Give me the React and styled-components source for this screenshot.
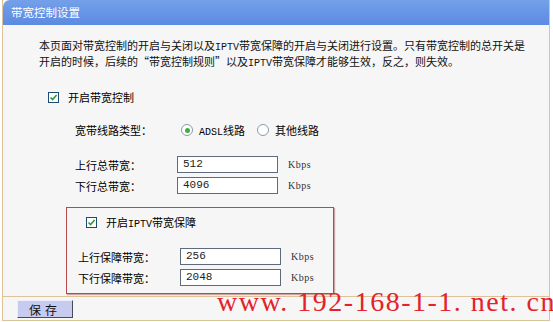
import React from 'react';
import styled, { createGlobalStyle } from 'styled-components';

const GlobalStyle = createGlobalStyle`
  html, body {
    margin: 0;
    padding: 0;
    background: #ffffff;
  }
  body {
    font-family: "SimSun", "Noto Sans CJK SC", sans-serif;
    font-size: 11px;
    color: #000;
  }
`;

const Panel = styled.div`
  margin-left: 2px;
  width: 546px;
  background-color: #f6f6f6;
  border-left: 1px solid #dcc39a;
  border-right: 1px solid #dcc39a;
  border-bottom: 1px solid #dcc39a;
  display: flex;
  flex-direction: column;
`;

const Header = styled.div`
  height: 25px;
  line-height: 25px;
  padding-left: 8px;
  color: #fff;
  font-size: 11.5px;
  background: linear-gradient(#74a0ea, #5b8ae2);
  border-top-left-radius: 7px;
`;

const Body = styled.div`
  padding: 12px 0 0 0;
`;

const Intro = styled.p`
  margin: 0 0 0 36px;
  width: 490px;
  height: 32px;
  line-height: 16px;
  font-size: 11px;
  color: #111;
  overflow: hidden;
`;

const Latin = styled.span`
  font-family: "Liberation Mono", monospace;
  font-size: 10px;
  line-height: 1;
`;

const CheckRow = styled.label`
  display: flex;
  align-items: center;
  height: 16px;
  margin: ${p => p.$top}px 0 0 ${p => p.$left}px;
  gap: 9px;
  font-size: 11px;
  line-height: 16px;
`;

const Check = styled.span`
  box-sizing: border-box;
  width: 11px;
  height: 11px;
  border: 1px solid #1c4a70;
  background: #fff;
  display: flex;
  align-items: center;
  justify-content: center;
`;

const Row = styled.div`
  display: flex;
  align-items: center;
  height: ${p => p.$h || 17}px;
  line-height: 16px;
  margin: ${p => p.$top}px 0 0 ${p => p.$left}px;
`;

const Label = styled.span`
  width: ${p => p.$w}px;
  flex: none;
`;

const Radios = styled.div`
  display: flex;
  align-items: center;
  gap: 6px;
`;

const Radio = styled.span`
  box-sizing: border-box;
  width: 12px;
  height: 12px;
  border-radius: 50%;
  border: 1px solid #8a9aa8;
  background: #fff;
  display: flex;
  align-items: center;
  justify-content: center;
  margin-left: ${p => p.$gap || 0}px;

  &::after {
    content: '';
    width: 5px;
    height: 5px;
    border-radius: 50%;
    background: ${p => (p.$on ? '#3fae3f' : 'transparent')};
  }
`;

const Input = styled.div`
  box-sizing: border-box;
  width: 101px;
  height: 17px;
  border: 1px solid #5d6b7c;
  background: #fff;
  padding-left: 5px;
  font-family: "Liberation Mono", monospace;
  font-size: 11px;
  line-height: 15px;
  color: #222;
`;

const Unit = styled.span`
  margin-left: 10px;
  font-family: "Liberation Serif", serif;
  font-size: 10px;
  color: #333;
  letter-spacing: 0.5px;
`;

const IptvBox = styled.div`
  box-sizing: border-box;
  margin: 13px 0 0 63px;
  width: 268px;
  height: 87px;
  border: 1px solid #b84a4a;
  box-shadow: 1px 1px 1px rgba(160, 80, 80, 0.5);
  padding-top: 6px;
`;

const Footer = styled.div`
  position: relative;
  height: 23px;
  border-top: 1px solid #dcc39a;
  margin-top: 2px;
  display: flex;
  align-items: center;
  padding-left: 14px;
`;

const SaveButton = styled.button`
  width: 56px;
  height: 18px;
  padding: 0;
  background: #c6cbef;
  border: 1px solid;
  border-color: #eef #4a4a5a #4a4a5a #eef;
  font-family: "SimSun", "Noto Sans CJK SC", sans-serif;
  font-size: 12px;
  letter-spacing: 4px;
  color: #111;
`;

const Watermark = styled.div`
  position: absolute;
  left: 214px;
  top: -11px;
  line-height: 32px;
  font-family: "Liberation Serif", serif;
  font-size: 28px;
  letter-spacing: 1.5px;
  color: #e3222c;
  white-space: nowrap;
`;

const CheckMark = () => (
  <svg width="9" height="9" viewBox="0 0 9 9">
    <path d="M1.5 4.5 L3.6 6.6 L7.6 2" stroke="#2e9a3a" strokeWidth="1.6" fill="none" />
  </svg>
);

const fields = [
  { label: '上行总带宽：', value: '512', top: 18 },
  { label: '下行总带宽：', value: '4096', top: 4 },
];

const iptvFields = [
  { label: '上行保障带宽：', value: '256', top: 18 },
  { label: '下行保障带宽：', value: '2048', top: 4 },
];

export default function App() {
  return (
    <>
      <GlobalStyle />
      <Panel>
        <Header>带宽控制设置</Header>
        <Body>
          <Intro>
            本页面对带宽控制的开启与关闭以及<Latin>IPTV</Latin>带宽保障的开启与关闭进行设置。只有带宽控制的总开关是开启的时候，后续的“带宽控制规则”以及<Latin>IPTV</Latin>带宽保障才能够生效，反之，则失效。
          </Intro>

          <CheckRow $top={20} $left={45}>
            <Check><CheckMark /></Check>
            开启带宽控制
          </CheckRow>

          <Row $top={17} $left={72} $h={16}>
            <Label $w={106}>宽带线路类型：</Label>
            <Radios>
              <Radio $on />
              <span><Latin>ADSL</Latin>线路</span>
              <Radio $gap={6} />
              <span>其他线路</span>
            </Radios>
          </Row>

          {fields.map(f => (
            <Row key={f.label} $top={f.top} $left={72}>
              <Label $w={102}>{f.label}</Label>
              <Input>{f.value}</Input>
              <Unit>Kbps</Unit>
            </Row>
          ))}

          <IptvBox>
            <CheckRow $top={0} $left={19}>
              <Check><CheckMark /></Check>
              <span>开启<Latin>IPTV</Latin>带宽保障</span>
            </CheckRow>
            {iptvFields.map(f => (
              <Row key={f.label} $top={f.top} $left={11}>
                <Label $w={102}>{f.label}</Label>
                <Input>{f.value}</Input>
                <Unit>Kbps</Unit>
              </Row>
            ))}
          </IptvBox>
        </Body>
        <Footer>
          <SaveButton>保存</SaveButton>
          <Watermark>www.&nbsp;192-168-1-1.&nbsp;net.&nbsp;cn</Watermark>
        </Footer>
      </Panel>
    </>
  );
}
